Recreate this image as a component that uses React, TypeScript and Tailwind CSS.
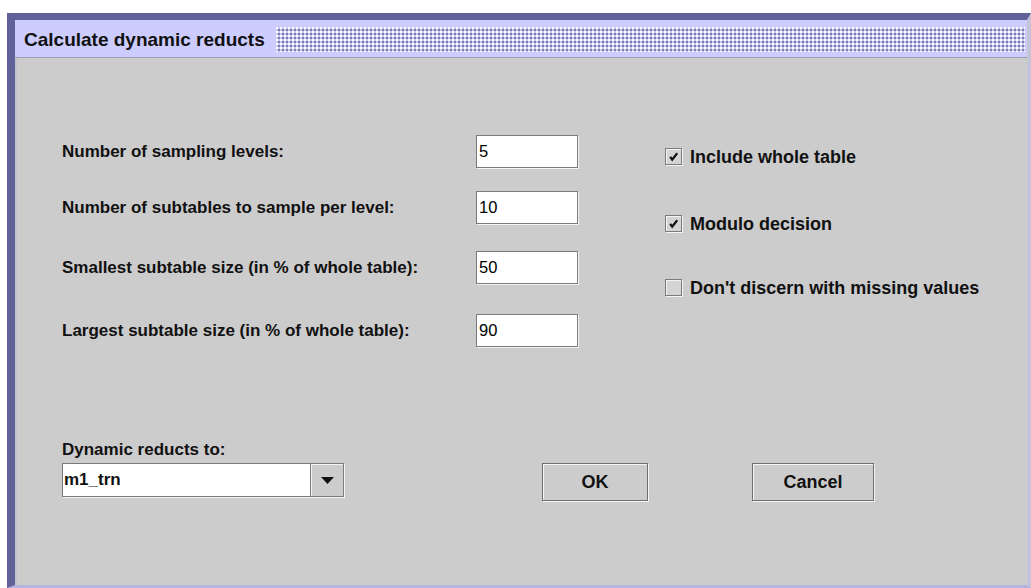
import type { ReactNode } from "react";

const sans = "font-['Liberation_Sans',Arial,sans-serif]";

function Field({ value }: { value: string }) {
  return (
    <div className="flex h-[33px] w-[102px] items-center border border-[#7b7b7b] bg-white pl-[2px] text-[16.5px] text-black shadow-[1px_1px_0_#f4f4f4]">
      {value}
    </div>
  );
}

function Check({ checked, children }: { checked: boolean; children: ReactNode }) {
  return (
    <div className="flex h-[17px] items-center">
      <span className="flex h-[17px] w-[17px] items-center justify-center border border-[#7b7b7b] bg-[#d4d4d4] shadow-[inset_1px_1px_0_#f4f4f4,1px_1px_0_#f4f4f4]">
        {checked && (
          <svg width="11" height="11" viewBox="0 0 11 11">
            <path d="M2.2 5.8 L4.2 8.6 L9.2 2.2" fill="none" stroke="#111" strokeWidth="2.2" />
          </svg>
        )}
      </span>
      <span className="ml-[8px] text-[18px] font-bold leading-none text-[#111]">{children}</span>
    </div>
  );
}

function Button({ label, width }: { label: string; width: string }) {
  return (
    <div
      className={`flex h-[38px] ${width} items-center justify-center border border-[#6e6e6e] bg-[#cccccc] text-[18px] font-bold text-[#111] shadow-[inset_1px_1px_0_#f4f4f4,1px_1px_0_#f4f4f4]`}
    >
      {label}
    </div>
  );
}

export default function App() {
  const rows = [
    { label: "Number of sampling levels:", value: "5", gap: "mt-0" },
    { label: "Number of subtables to sample per level:", value: "10", gap: "mt-[23px]" },
    { label: "Smallest subtable size (in % of whole table):", value: "50", gap: "mt-[27px]" },
    { label: "Largest subtable size (in % of whole table):", value: "90", gap: "mt-[30px]" },
  ];

  return (
    <div className={`h-[588px] w-[1031px] overflow-hidden bg-white pl-[7px] pt-[13px] ${sans}`}>
      <div className="flex h-full flex-col border-l-[8px] border-r-[4px] border-t-[7px] border-b-[3px] border-l-[#62629a] border-t-[#62629a] border-r-[#c4c4d8] border-b-[#b4b4dc] bg-[#cccccc]">
        {/* title bar with metal bumps */}
        <div className="flex h-[38px] items-center border-b border-[#9c9cb4] bg-[#ccccff] pl-[9px] pr-[2px] pt-[2px]">
          <span className="text-[19px] font-bold leading-none text-[#111]">Calculate dynamic reducts</span>
          <div className="ml-[11px] h-[25px] flex-1 bg-[#c6c6f4] bg-[radial-gradient(circle_at_1px_1px,#ffffff_0.9px,transparent_1.1px),radial-gradient(circle_at_3px_3px,#7c7cae_0.9px,transparent_1.1px)] bg-[length:4px_4px]" />
        </div>

        <div className="flex flex-1 flex-col border-l-2 border-[#c4c4d0] pl-[45px] pt-[77px]">
          <div className="flex">
            <div className="flex flex-col">
              {rows.map((r) => (
                <div key={r.label} className={`flex h-[33px] items-center ${r.gap}`}>
                  <span className="w-[414px] text-[17px] font-bold text-[#111]">{r.label}</span>
                  <Field value={r.value} />
                </div>
              ))}
            </div>
            <div className="ml-[87px] mt-[13px] flex flex-col">
              <Check checked>Include whole table</Check>
              <div className="mt-[50px]">
                <Check checked>Modulo decision</Check>
              </div>
              <div className="mt-[47px]">
                <Check checked={false}>Don&apos;t discern with missing values</Check>
              </div>
            </div>
          </div>

          <div className="mt-[92px] h-[22px] text-[17px] font-bold leading-[22px] text-[#111]">Dynamic reducts to:</div>
          <div className="mt-[2px] flex items-start">
            <div className="flex h-[34px] w-[282px] border border-[#7b7b7b] bg-white shadow-[1px_1px_0_#f4f4f4]">
              <span className="flex flex-1 items-center pl-[1px] text-[17px] font-bold text-[#111]">m1_trn</span>
              <span className="flex w-[33px] items-center justify-center border-l border-[#7b7b7b] bg-[#cccccc] shadow-[inset_1px_1px_0_#f4f4f4]">
                <svg width="13" height="7" viewBox="0 0 13 7">
                  <path d="M0 0 H13 L6.5 7 Z" fill="#111" />
                </svg>
              </span>
            </div>
            <div className="ml-[198px]">
              <Button label="OK" width="w-[106px]" />
            </div>
            <div className="ml-[104px]">
              <Button label="Cancel" width="w-[122px]" />
            </div>
          </div>
        </div>
      </div>
    </div>
  );
}
